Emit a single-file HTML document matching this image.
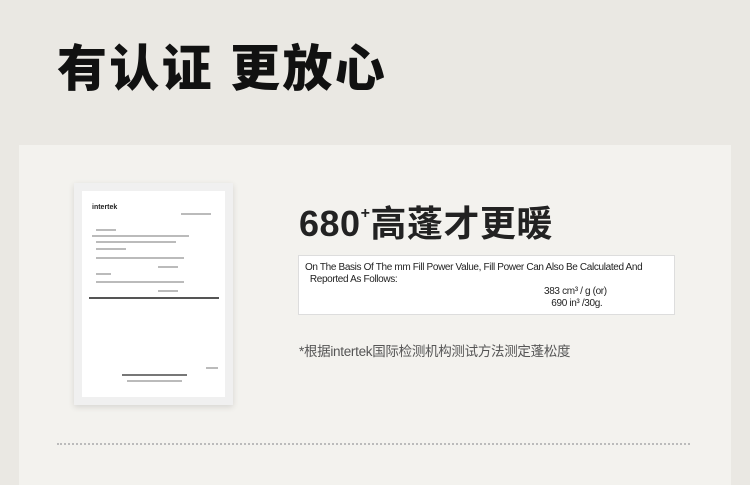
<!DOCTYPE html>
<html><head><meta charset="utf-8"><style>
body{margin:0;width:750px;height:471px;background:#eae8e3;position:relative;overflow:hidden;font-family:"Liberation Sans","Noto Sans CJK SC",sans-serif}
.t{position:absolute;left:57px;top:36px;font-size:50px;font-weight:900;color:#111;letter-spacing:2.3px;line-height:66px}
.card{position:absolute;left:19px;top:145px;width:712px;height:340px;background:#f3f2ee}
.doc{position:absolute;left:74px;top:183px;width:159px;height:222px;background:#f0f0f0;box-shadow:0 2px 6px rgba(0,0,0,.12)}
.in{position:absolute;left:8px;top:8px;right:8px;bottom:8px;background:#fff}
.l{position:absolute;height:1.5px;background:#bbb}
.h{position:absolute;left:299px;top:190px;font-size:36px;font-weight:bold;color:#222;line-height:48px;letter-spacing:0.5px}
.h sup{font-size:16px;vertical-align:18px}
.box{position:absolute;left:298px;top:255px;width:375px;height:58px;background:#fff;border:1px solid #ddd;font-size:10px;letter-spacing:-0.35px;color:#222;line-height:12px}
.f{position:absolute;left:299px;top:340px;font-size:13.5px;color:#555;letter-spacing:-0.3px}
.dot{position:absolute;left:57px;top:443px;width:633px;border-top:2px dotted #bbb}
</style></head><body>
<div class="t">有认证 更放心</div>
<div class="card"></div>
<div class="doc"><div class="in">
<div style="position:absolute;left:10px;top:13px;font-size:7px;font-weight:bold;color:#222">intertek</div>
<div class="l" style="left:99px;top:22px;width:30px"></div>
<div class="l" style="left:14px;top:38px;width:20px"></div>
<div class="l" style="left:10px;top:44px;width:97px"></div>
<div class="l" style="left:14px;top:50px;width:80px"></div>
<div class="l" style="left:14px;top:57px;width:30px"></div>
<div class="l" style="left:14px;top:66px;width:88px"></div>
<div class="l" style="left:76px;top:75px;width:20px"></div>
<div class="l" style="left:14px;top:82px;width:15px"></div>
<div class="l" style="left:14px;top:90px;width:88px"></div>
<div class="l" style="left:76px;top:99px;width:20px"></div>
<div class="l" style="left:7px;top:106px;width:130px;background:#555"></div>
<div class="l" style="left:40px;top:183px;width:65px;background:#777"></div>
<div class="l" style="left:45px;top:189px;width:55px"></div>
<div class="l" style="left:124px;top:176px;width:12px"></div>
</div></div>
<div class="h">680<sup>+</sup>高蓬才更暖</div>
<div class="box"><div style="position:absolute;left:6px;top:6px;white-space:nowrap">On The Basis Of The mm Fill Power Value, Fill Power Can Also Be Calculated And<br>&nbsp;&nbsp;Reported As Follows:</div>
<div style="position:absolute;left:245px;top:30px;white-space:nowrap">383 cm³ / g (or)<br>&nbsp;&nbsp;&nbsp;690 in³ /30g.</div></div>
<div class="f">*根据intertek国际检测机构测试方法测定蓬松度</div>
<div class="dot"></div>
</body></html>
